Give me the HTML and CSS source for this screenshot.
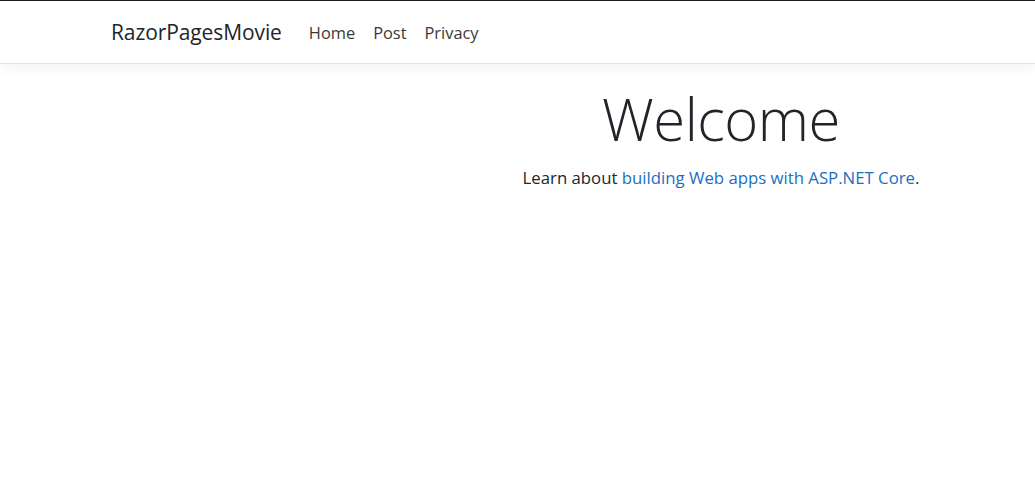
FILE: index.html
```html
<!DOCTYPE html>
<html lang="en">
<head>
<meta charset="utf-8">
<title>Home page - RazorPagesMovie</title>
<link rel="stylesheet" href="styles.css">
</head>
<body>
<header class="topbar">
  <nav class="navbar">
    <a class="brand" href="#">RazorPagesMovie</a>
    <ul class="nav">
      <li><a class="nav-link" href="#">Home</a></li>
      <li><a class="nav-link" href="#">Post</a></li>
      <li><a class="nav-link" href="#">Privacy</a></li>
    </ul>
  </nav>
</header>
<main class="main">
  <div class="welcome">
    <h1 class="display">Welcome</h1>
    <p class="lead">Learn about <a href="#">building Web apps with ASP.NET Core</a>.</p>
  </div>
</main>
</body>
</html>
```
FILE: styles.css
```css
html, body {
  margin: 0;
  padding: 0;
}
body {
  font-family: "Open Sans", "Noto Sans", sans-serif;
  color: #212529;
  background: #fff;
  border-top: 1px solid #1a1a1a;
}
a { text-decoration: none; }
.topbar {
  height: 62px;
  border-bottom: 1px solid #dee2e6;
  box-shadow: 0 4px 12px rgba(0,0,0,0.05);
  background: #fff;
  position: relative;
}
.navbar {
  display: flex;
  align-items: center;
  height: 100%;
  padding-left: 111px;
}
.brand {
  font-size: 21px;
  color: #212529;
  margin-right: 18px;
  letter-spacing: -0.1px;
}
.nav {
  display: flex;
  list-style: none;
  margin: 0;
  padding: 0;
}
.nav-link {
  display: block;
  padding: 8px 9px;
  font-size: 16.4px;
  color: #3a3a3a;
}
.main {
  padding-left: 407px;
}
.welcome {
  text-align: center;
  padding-top: 20px;
}
.display {
  font-size: 58px;
  font-weight: 300;
  line-height: 1.2;
  margin: 0 0 12px;
  letter-spacing: -0.5px;
}
.lead {
  margin: 0;
  font-size: 16.75px;
}
.lead a { color: #1b6ec2; }
```
